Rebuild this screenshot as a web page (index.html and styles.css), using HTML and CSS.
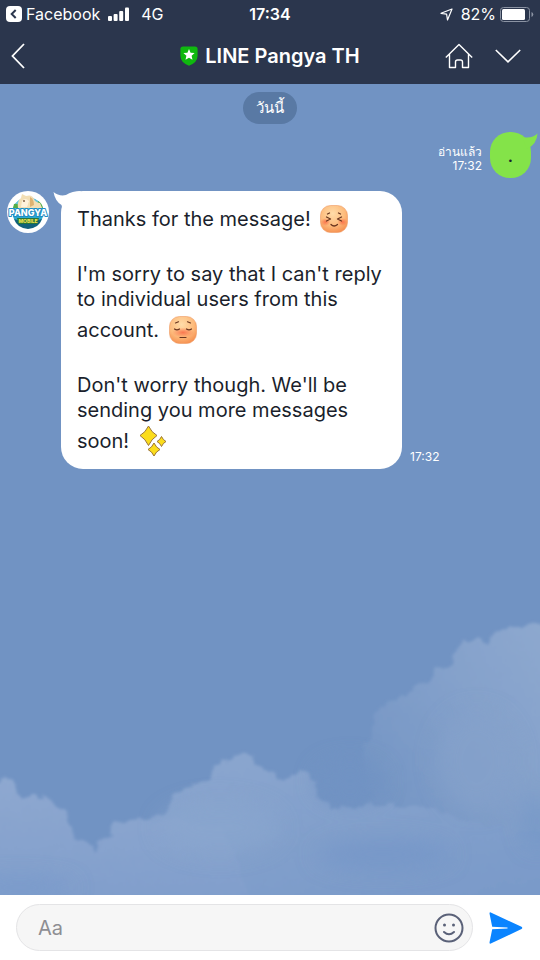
FILE: index.html
```html
<!DOCTYPE html>
<html lang="en">
<head>
    <meta charset="UTF-8">
    <meta name="viewport" content="width=device-width, initial-scale=1.0">
    <title>LINE Pangya TH</title>
    <link rel="stylesheet" href="styles.css">
</head>
<body>
    <header class="top">
        <div class="status-bar">
            <div class="status-left">
                <a href="#" class="back-app">
                    <svg width="16" height="16" viewBox="0 0 16 16" aria-hidden="true">
                        <rect width="16" height="16" rx="4" fill="#fff"/>
                        <path d="M9.700 4L5.700 8l4 4" fill="none" stroke="#2b364d" stroke-width="2"/>
                    </svg>
                    Facebook
                </a>
                <svg width="21" height="14" viewBox="0 0 21 14" fill="#fff" aria-hidden="true">
                    <rect x="0" y="9" width="4" height="5" rx="1"/>
                    <rect x="5.600" y="7" width="4" height="7" rx="1"/>
                    <rect x="11.200" y="4" width="4" height="10" rx="1"/>
                    <rect x="17" y="0.500" width="4" height="13.500" rx="1"/>
                </svg>
                <span class="network">4G</span>
            </div>
            <span class="clock">17:34</span>
            <div class="status-right">
                <svg width="13" height="13" viewBox="0 0 13 13" fill="none" stroke="#fff" stroke-width="1.200" stroke-linejoin="round" aria-hidden="true">
                    <path d="M12 1L1 5.300l5.600.9L7.500 12z"/>
                </svg>
                <span class="percent">82%</span>
                <svg width="34" height="15" viewBox="0 0 34 15" aria-hidden="true">
                    <rect x="0.500" y="0.500" width="29" height="14" rx="3" fill="none" stroke="#8b93a3"/>
                    <rect x="2" y="2" width="23" height="11" rx="1.500" fill="#fff"/>
                    <path d="M31.500 5v5q1.800-.6 1.800-2.500T31.500 5z" fill="#8b93a3"/>
                </svg>
            </div>
        </div>
        <nav class="nav-bar">
            <button type="button" class="icon-btn nav-back" aria-label="Back">
                <svg width="14" height="26" viewBox="0 0 14 26" fill="none" stroke="#fff" stroke-width="1.800"><path d="M13 1L1.500 13 13 25"/></svg>
            </button>
            <h1 class="title">
                <svg width="18" height="20" viewBox="0 0 18 20" aria-hidden="true">
                    <path d="M3 .5h12Q17.600.5 17.600 3v6.500q0 7-8.600 10.200Q.4 16.500.4 9.500V3Q.4.5 3 .5z" fill="#0fb80f"/>
                    <path d="M9 3l1.600 3.700 4 .4-3 2.700.9 4L9 11.700l-3.500 2.100.9-4-3-2.700 4-.4z" fill="#fff"/>
                </svg>
                LINE Pangya TH
            </h1>
            <div class="nav-actions">
                <button type="button" class="icon-btn" aria-label="Home">
                    <svg width="28" height="26" viewBox="0 0 28 26" fill="none" stroke="#fff" stroke-width="1.400" stroke-linejoin="round"><path d="M.8 14.500L14 1.500l13.200 13M4.500 11v13.500h6V19q0-2 2-2h3q2 0 2 2v5.500h6V11"/></svg>
                </button>
                <button type="button" class="icon-btn" aria-label="Menu">
                    <svg width="26" height="14" viewBox="0 0 26 14" fill="none" stroke="#fff" stroke-width="1.600"><path d="M.8 1L13 12.800 25.200 1"/></svg>
                </button>
            </div>
        </nav>
    </header>

    <main class="chat">
        <svg class="clouds" viewBox="0 0 1620 882" preserveAspectRatio="xMidYMax slice" aria-hidden="true">
            <defs>
                <linearGradient id="cloudRight" x1="1" y1="0" x2="0.150" y2="0.650">
                    <stop offset="0" stop-color="#91abd0"/>
                    <stop offset="0.500" stop-color="#84a1cb"/>
                    <stop offset="1" stop-color="#7193c3"/>
                </linearGradient>
                <linearGradient id="cloudLeft" x1="0" y1="0" x2="0" y2="1">
                    <stop offset="0" stop-color="#8ea8d0"/>
                    <stop offset="1" stop-color="#7f9dcb"/>
                </linearGradient>
                <linearGradient id="cloudMid" x1="0" y1="0" x2="0.600" y2="1">
                    <stop offset="0" stop-color="#8ca7cf"/>
                    <stop offset="1" stop-color="#7a9ac9"/>
                </linearGradient>
                <filter id="rough" x="-5%" y="-5%" width="110%" height="110%">
                    <feTurbulence type="fractalNoise" baseFrequency="0.025" numOctaves="5" seed="4"/>
                    <feDisplacementMap in="SourceGraphic" scale="50" xChannelSelector="R" yChannelSelector="G"/>
                    <feGaussianBlur stdDeviation="4"/>
                </filter>
                <filter id="haze" x="-30%" y="-30%" width="160%" height="160%">
                    <feGaussianBlur stdDeviation="32"/>
                </filter>
            </defs>
            <g filter="url(#rough)">
                <path d="M1760 30L1650 60l-60 8-50 14-60 20-20 20-25-12-45 16-30 28 2 28-45 18-28 45-60 25-40 28-30 4-28 35-10 50-28 42-10 70 35 90-50 60-100 50v300h800z" fill="url(#cloudRight)"/>
                <path d="M445 670l60-45 15-38 60-38 45-18 20-38 60-28 45-10 20 35 35 15 22 38 38-8 40-32 38 25 12 55 30 40 100-10 120-6 120 30 220 60 180-10v250H380z" fill="url(#cloudMid)"/>
                <path d="M-40 563l65-35 25 15 0 35 60 12 60 20 40 38 5 50 40 26 22 20 28-28 50-46 60-12 45 14 70-30 150 60 100 240H-40z" fill="url(#cloudLeft)"/>
            </g>
            <g filter="url(#haze)">
                <ellipse cx="1150" cy="760" rx="200" ry="45" fill="#7396c7" opacity="0.700"/>
                <ellipse cx="1050" cy="540" rx="100" ry="60" fill="#7193c3"/>
                <ellipse cx="1610" cy="660" rx="40" ry="80" fill="#7194c6" opacity="0.600"/>
                <ellipse cx="1430" cy="480" rx="120" ry="150" fill="#84a1cb" opacity="0.700"/>
                <ellipse cx="660" cy="680" rx="180" ry="80" fill="#8ba6ce" opacity="0.600"/>
                <ellipse cx="60" cy="860" rx="160" ry="25" fill="#7798ca" opacity="0.800"/>
            </g>
        </svg>

        <span class="date-chip">วันนี้</span>

        <div class="message sent">
            <div class="meta">
                <span>อ่านแล้ว</span>
                <time>17:32</time>
            </div>
            <p class="bubble">.
                <svg class="tail" width="16" height="20" viewBox="0 0 16 20" aria-hidden="true"><path d="M0 5Q10 7 15.500 1.500 15 12 5 17z" fill="#84e349"/></svg>
            </p>
        </div>

        <div class="message received">
            <svg class="avatar" width="42" height="42" viewBox="0 0 42 42" role="img" aria-label="Pangya Mobile">
                <circle cx="21" cy="21" r="21" fill="#fff"/>
                <ellipse cx="21" cy="21.500" rx="15.500" ry="15" fill="#2ba8cf"/>
                <path d="M7 15q4-8 12-8 14 0 16 9l-3 4H9z" fill="#67c7dc"/>
                <path d="M7 13q5-1 6 4H6zM31 10q4 2 5 7l-6-1z" fill="#55ad48"/>
                <path d="M11 17q-1-7 3-10l1-4 4 2q6-2 8 3 1 3 6 4l2 5z" fill="#f3dfb5"/>
                <path d="M15 10q3-4 7 0l-2 6h-6z" fill="#fff2dc"/>
                <path d="M23 6q4 2 4 8l-4 2z" fill="#dfb271"/>
                <circle cx="17" cy="10" r="0.900" fill="#775238"/>
                <path d="M7 28q13 5 28 0-3 9-14 10Q10 37 7 28z" fill="#12607c"/>
                <path d="M10 27h22l-2 6H12z" fill="#25753e"/>
                <text class="logo-name" x="21" y="25">PANGYA</text>
                <text class="logo-sub" x="21" y="32">MOBILE</text>
            </svg>
            <div class="bubble">
                <svg class="tail" width="28" height="20" viewBox="0 0 28 20" aria-hidden="true"><path d="M.5 1Q6 5.500 13 4 19 0 28 0L20 14 9 20Q9.500 16 8.500 14 2 10 .5 1z" fill="#fff"/></svg>
                <p>Thanks for the message!
                    <svg class="emoji" width="28" height="28" viewBox="0 0 28 28" role="img" aria-label="Happy">
                        <defs>
                            <radialGradient id="skin" cx="0.450" cy="0.300" r="0.750">
                                <stop offset="0" stop-color="#ffdca9"/>
                                <stop offset="0.600" stop-color="#fdbb7c"/>
                                <stop offset="1" stop-color="#f58c4c"/>
                            </radialGradient>
                            <radialGradient id="blush">
                                <stop offset="0" stop-color="#f9633f" stop-opacity="0.800"/>
                                <stop offset="1" stop-color="#f9633f" stop-opacity="0"/>
                            </radialGradient>
                        </defs>
                        <rect x="0.500" y="0.500" width="27" height="27" rx="10" fill="url(#skin)" stroke="#ee9b63" stroke-width="0.600"/>
                        <ellipse cx="5.500" cy="17" rx="5" ry="4" fill="url(#blush)"/>
                        <ellipse cx="22.500" cy="17" rx="5" ry="4" fill="url(#blush)"/>
                        <path d="M7.500 9l2-1M18.500 8l2 1M6.500 12l4 2-4 2M21.500 12l-4 2 4 2M11 19.500q3 3 6.500 0" fill="none" stroke="#69351f" stroke-width="1.300" stroke-linecap="round" stroke-linejoin="round"/>
                    </svg>
                </p>
                <p>I'm sorry to say that I can't reply to individual users from this account.
                    <svg class="emoji" width="28" height="28" viewBox="0 0 28 28" role="img" aria-label="Sorry">
                        <rect x="0.500" y="0.500" width="27" height="27" rx="10" fill="url(#skin)" stroke="#ee9b63" stroke-width="0.600"/>
                        <ellipse cx="14" cy="16.500" rx="11" ry="5" fill="url(#blush)"/>
                        <path d="M6.500 7l3-1.200M18.500 5.800l3 1.200M5.500 13q2.500 1.800 5 0M17.500 13q2.500 1.800 5 0M11 21.500h6" fill="none" stroke="#69351f" stroke-width="1.200" stroke-linecap="round"/>
                    </svg>
                </p>
                <p>Don't worry though. We'll be sending you more messages soon!
                    <svg class="emoji" width="28" height="28" viewBox="0 0 28 28" overflow="visible" role="img" aria-label="Sparkles">
                        <g transform="translate(0 -2)" fill="#fbdd1c" stroke="#9c7431" stroke-width="1" stroke-linejoin="round">
                            <path d="M9.500 1q3 6.500 8.500 9.500-5.500 3.500-8.500 10-3-6.500-8.500-10Q6.500 7.500 9.500 1z"/>
                            <path d="M22.500 11.500q1.500 3.500 4.500 5-3 1.500-4.500 5-1.500-3.500-4.500-5 3-1.500 4.500-5z"/>
                            <path d="M15 18q2 4.500 6 6.500-4 2-6 6.500-2-4.500-6-6.500 4-2 6-6.500z"/>
                        </g>
                    </svg>
                </p>
            </div>
            <time class="meta">17:32</time>
        </div>
    </main>

    <form class="composer">
        <div class="field">
            <input type="text" placeholder="Aa" aria-label="Message">
            <button type="button" class="icon-btn" aria-label="Stickers">
                <svg width="30" height="30" viewBox="0 0 30 30" fill="none" stroke="#5a6178" stroke-width="2" stroke-linecap="round">
                    <circle cx="15" cy="15" r="13.500"/>
                    <path d="M10 19q5 4.500 10 0"/>
                    <circle cx="10.500" cy="12" r="1.500" fill="#5a6178" stroke="none"/>
                    <circle cx="19.500" cy="12" r="1.500" fill="#5a6178" stroke="none"/>
                </svg>
            </button>
        </div>
        <button type="submit" class="icon-btn" aria-label="Send">
            <svg width="34" height="32" viewBox="0 0 34 32"><path d="M1.800.4L32.500 14.800q1.500 1.200 0 2.200L1.800 31.600Q.2 32 .6 30L3.200 17.200l15.300-.6v-1.200l-15.300-.6L.6 2Q.2 0 1.800.4z" fill="#0a84ff"/></svg>
        </button>
    </form>
</body>
</html>
```
FILE: styles.css
```css
:root {
    --header-bg: #2b364d;
    --sky: #7193c3;
    --sent: #84e349;
    --text-dark: #1b1f2c;
}

* {
    box-sizing: border-box;
}

body {
    margin: 0;
    min-height: 100vh;
    display: flex;
    flex-direction: column;
    background: #ffffff;
    font-family: 'Inter', 'Noto Sans', sans-serif;
    color: var(--text-dark);
}

svg {
    display: block;
    flex-shrink: 0;
}

p {
    margin: 0;
}

.icon-btn {
    padding: 0;
    border: none;
    background: none;
    cursor: pointer;
}

/* Header */
.top {
    background: var(--header-bg);
    color: #ffffff;
}

.status-bar {
    display: grid;
    grid-template-columns: 1fr auto 1fr;
    align-items: center;
    height: 28px;
    padding: 0 6px;
    font-size: 16px;
}

.status-left,
.status-right,
.back-app {
    display: flex;
    align-items: center;
}

.status-left {
    gap: 8px;
}

.back-app {
    gap: 4px;
    color: inherit;
    text-decoration: none;
}

.network {
    margin-left: 4px;
}

.clock {
    font-weight: 600;
}

.status-right {
    justify-content: flex-end;
    gap: 4px;
}

.percent {
    margin-left: 4px;
}

.nav-bar {
    display: grid;
    grid-template-columns: 1fr auto 1fr;
    align-items: center;
    height: 56px;
    padding: 0 11px;
}

.nav-back {
    justify-self: start;
}

.title {
    display: flex;
    align-items: center;
    gap: 7px;
    margin: 0;
    font-size: 20px;
    font-weight: 600;
}

.nav-actions {
    display: flex;
    justify-content: flex-end;
    align-items: center;
    gap: 22px;
    padding-right: 8px;
}

/* Chat */
.chat {
    position: relative;
    isolation: isolate;
    overflow: hidden;
    flex: 1;
    display: flex;
    flex-direction: column;
    padding: 8px 7px;
    background: var(--sky);
}

.clouds {
    position: absolute;
    z-index: -1;
    left: 0;
    bottom: 0;
    width: 100%;
}

.date-chip {
    align-self: center;
    padding: 0 13px;
    border-radius: 16px;
    background: #5979a4;
    color: #ffffff;
    font-size: 15px;
    line-height: 32px;
}

.message {
    display: flex;
}

.meta {
    color: #ffffff;
    font-size: 12px;
    line-height: 14px;
}

.bubble {
    position: relative;
}

.sent {
    justify-content: flex-end;
    align-items: flex-end;
    gap: 8px;
    margin: 8px 2px 13px 0;
}

.sent .meta {
    display: flex;
    flex-direction: column;
    align-items: flex-end;
    padding-bottom: 5px;
}

.sent .bubble {
    width: 41px;
    padding: 10px 0;
    border-radius: 20px;
    background: var(--sent);
    text-align: center;
    font-size: 20px;
    line-height: 26px;
}

.sent .tail {
    position: absolute;
    top: 0;
    right: -7px;
}

.received {
    align-items: flex-start;
}

.received .bubble {
    width: 341px;
    margin-left: 12px;
    padding: 10px 16px;
    border-radius: 22px;
    background: #ffffff;
    font-size: 20px;
    line-height: 25px;
}

.received .bubble p + p {
    margin-top: 25px;
}

.received .tail {
    position: absolute;
    top: 0;
    left: -8px;
}

.received .meta {
    align-self: flex-end;
    margin-left: 8px;
    padding-bottom: 5px;
}

.emoji {
    display: inline-block;
    margin: 4px;
    vertical-align: -11px;
}

.logo-name,
.logo-sub {
    font-weight: 800;
    text-anchor: middle;
    paint-order: stroke;
    stroke-linejoin: round;
}

.logo-name {
    font-size: 9px;
    fill: #ffffff;
    stroke: #1e8cc4;
    stroke-width: 2px;
}

.logo-sub {
    font-size: 5px;
    fill: #f3e34c;
    stroke: #25753e;
    stroke-width: 1px;
}

/* Composer */
.composer {
    display: flex;
    align-items: center;
    gap: 16px;
    padding: 9px 17px 9px 16px;
    background: #ffffff;
}

.field {
    flex: 1;
    display: flex;
    align-items: center;
    height: 47px;
    padding: 0 8px 0 21px;
    border: 1px solid #e4e4e6;
    border-radius: 24px;
    background: #f6f6f6;
}

.field input {
    flex: 1;
    min-width: 0;
    padding: 0;
    border: none;
    outline: none;
    background: none;
    font-family: inherit;
    font-size: 20px;
    color: var(--text-dark);
}

.field input::placeholder {
    color: #8e8e93;
}
```
